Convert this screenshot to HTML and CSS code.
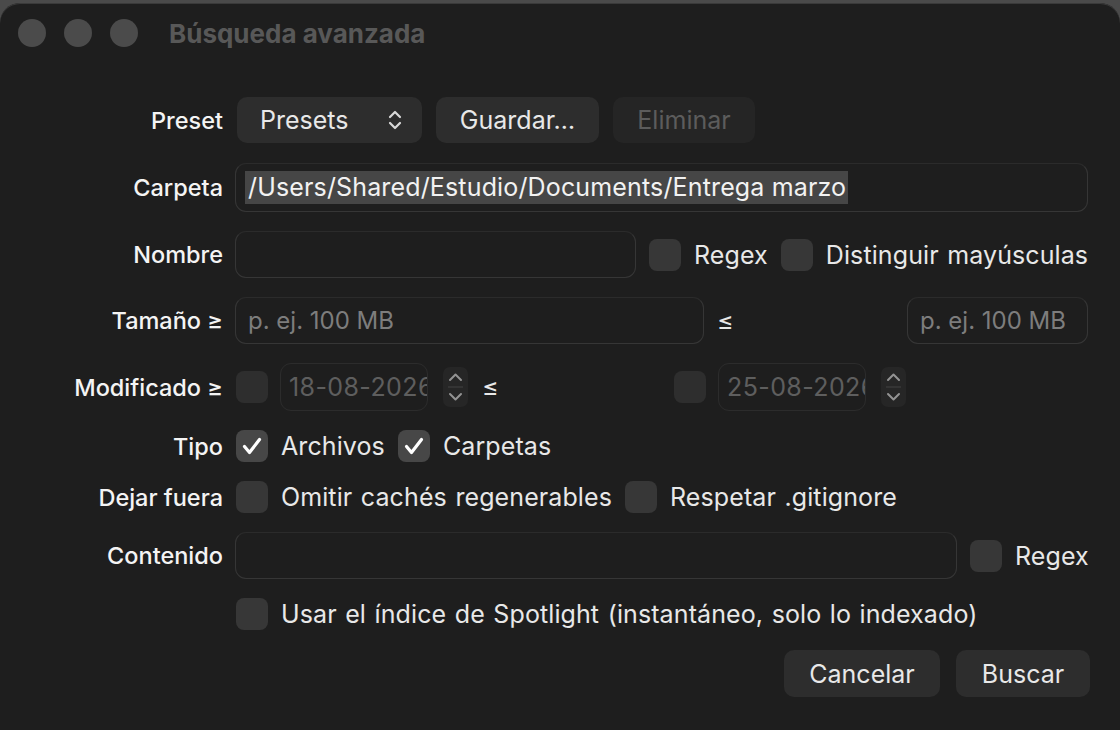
FILE: index.html
```html
<!DOCTYPE html>
<html lang="es">
<head>
<meta charset="utf-8">
<title>Búsqueda avanzada</title>
<link rel="stylesheet" href="styles.css">
</head>
<body>
<div class="window">
  <div class="titlebar">
    <div class="lights"><span class="light"></span><span class="light"></span><span class="light"></span></div>
    <div class="title">Búsqueda avanzada</div>
  </div>
  <div class="form">
    <div class="row r-preset">
      <div class="lbl">Preset</div>
      <div class="ctl">
        <div class="btn popup"><span>Presets</span>
          <svg class="updown" width="14" height="22" viewBox="0 0 14 22"><polyline points="2,8 7,3 12,8" /><polyline points="2,14 7,19 12,14" /></svg>
        </div>
        <div class="btn b-save">Guardar…</div>
        <div class="btn b-del disabled">Eliminar</div>
      </div>
    </div>
    <div class="row r-folder">
      <div class="lbl">Carpeta</div>
      <div class="ctl">
        <div class="field f-folder"><span class="sel">/Users/Shared/Estudio/Documents/Entrega marzo</span></div>
      </div>
    </div>
    <div class="row r-field">
      <div class="lbl">Nombre</div>
      <div class="ctl opts">
        <div class="field f-name"></div>
        <span class="cb"></span><span class="opt">Regex</span>
        <span class="cb"></span><span class="opt">Distinguir mayúsculas</span>
      </div>
    </div>
    <div class="row r-field">
      <div class="lbl">Tamaño ≥</div>
      <div class="ctl">
        <div class="field f-size1"><span class="ph">p. ej. 100 MB</span></div>
        <span class="le">≤</span>
        <div class="field f-size2"><span class="ph">p. ej. 100 MB</span></div>
      </div>
    </div>
    <div class="row r-date">
      <div class="lbl">Modificado ≥</div>
      <div class="ctl">
        <span class="cb dim first"></span>
        <div class="field date"><span>18-08-2026</span></div>
        <span class="stepper"><svg width="25" height="40" viewBox="0 0 25 40"><polyline points="7,13 12.5,7.5 18,13" /><line x1="5" y1="20" x2="20" y2="20" class="div" /><polyline points="7,27 12.5,32.5 18,27" /></svg></span>
        <span class="le2">≤</span>
        <span class="cb dim"></span>
        <div class="field date"><span>25-08-2026</span></div>
        <span class="stepper"><svg width="25" height="40" viewBox="0 0 25 40"><polyline points="7,13 12.5,7.5 18,13" /><line x1="5" y1="20" x2="20" y2="20" class="div" /><polyline points="7,27 12.5,32.5 18,27" /></svg></span>
      </div>
    </div>
    <div class="row r-check">
      <div class="lbl">Tipo</div>
      <div class="ctl opts">
        <span class="cb on first"><svg width="32" height="32" viewBox="0 0 32 32"><polyline points="8.5,16.5 13.5,22.5 23.5,9.5" /></svg></span><span class="opt">Archivos</span>
        <span class="cb on"><svg width="32" height="32" viewBox="0 0 32 32"><polyline points="8.5,16.5 13.5,22.5 23.5,9.5" /></svg></span><span class="opt">Carpetas</span>
      </div>
    </div>
    <div class="row r-check">
      <div class="lbl">Dejar fuera</div>
      <div class="ctl opts">
        <span class="cb first"></span><span class="opt">Omitir cachés regenerables</span>
        <span class="cb"></span><span class="opt">Respetar .gitignore</span>
      </div>
    </div>
    <div class="row r-field">
      <div class="lbl">Contenido</div>
      <div class="ctl opts">
        <div class="field f-content"></div>
        <span class="cb"></span><span class="opt">Regex</span>
      </div>
    </div>
    <div class="row r-check">
      <div class="lbl"></div>
      <div class="ctl opts">
        <span class="cb first"></span><span class="opt">Usar el índice de Spotlight (instantáneo, solo lo indexado)</span>
      </div>
    </div>
    <div class="actions">
      <div class="btn b-cancel">Cancelar</div>
      <div class="btn b-search">Buscar</div>
    </div>
  </div>
</div>
</body>
</html>
```

FILE: styles.css
```css
html, body {
  margin: 0;
  padding: 0;
}
body {
  background: #4a4a4a;
  font-family: "Inter", "Noto Sans", sans-serif;
  font-size: 25px;
  color: #e8e8e8;
  width: 1120px;
  height: 730px;
  overflow: hidden;
}
.window {
  margin-top: 3px;
  height: 727px;
  background: #1e1e1e;
  border-radius: 20px 20px 0 0;
  box-shadow: inset 0 1px 0 #3a3a3a;
}
.titlebar {
  height: 60px;
  display: flex;
  align-items: center;
}
.lights {
  display: flex;
  gap: 18px;
  margin-left: 18px;
}
.light {
  width: 28px;
  height: 28px;
  border-radius: 50%;
  background: #4b4b4b;
}
.title {
  margin-left: 31px;
  font-weight: 700;
  font-size: 26px;
  color: #585858;
  margin-top: 1px;
}
.form {
  padding: 34px 32px 0 8px;
  display: flex;
  flex-direction: column;
  gap: 19px;
}
.row {
  display: grid;
  grid-template-columns: 215px 1fr;
  column-gap: 12px;
  align-items: center;
}
.r-preset { height: 46px; margin-bottom: 1px; }
.r-folder { height: 49px; }
.r-field { height: 47px; }
.r-date { height: 48px; }
.r-check { height: 32px; }
.lbl {
  text-align: right;
  white-space: nowrap;
  font-size: 23.5px;
  font-weight: 500;
  color: #f4f4f4;
}
.ctl {
  display: flex;
  align-items: center;
  height: 100%;
}
.opts { gap: 13px; }
.opt {
  letter-spacing: 0.1px;
  word-spacing: 1.4px;
  white-space: nowrap;
}
.btn {
  height: 46px;
  border-radius: 10px;
  background: #2d2d2d;
  display: flex;
  align-items: center;
  justify-content: center;
  box-sizing: border-box;
  color: #e8e8e8;
}
.r-preset .ctl { gap: 14px; padding-left: 2px; }
.popup {
  width: 185px;
  justify-content: space-between;
  padding: 0 20px 0 23px;
}
.updown polyline {
  fill: none;
  stroke: #d8d8d8;
  stroke-width: 2.2;
  stroke-linecap: round;
  stroke-linejoin: round;
}
.b-save { width: 163px; }
.b-del { width: 142px; }
.disabled {
  background: #252525;
  color: #5c5c5c;
}
.field {
  height: 100%;
  box-sizing: border-box;
  border: 1px solid #363636;
  border-top-color: #2b2b2b;
  border-radius: 11px;
  display: flex;
  align-items: center;
  padding-left: 12px;
  overflow: hidden;
  white-space: nowrap;
}
.f-folder {
  width: 100%;
  padding-left: 9px;
}
.sel {
  background: #464646;
  color: #f2f2f2;
  line-height: 33px;
  padding: 0 2px 0 3px;
  letter-spacing: 0.15px;
}
.f-name { width: 401px; }
.f-size1 { width: 469px; }
.f-size2 { width: 181px; margin-left: auto; }
.f-content { width: 722px; }
.ph {
  color: #7d7d7d;
  font-size: 24px;
}
.le { margin-left: 13px; }
.cb {
  width: 32px;
  height: 32px;
  border-radius: 8px;
  background: #373737;
  flex: none;
  display: flex;
  align-items: center;
  justify-content: center;
}
.cb.first { margin-left: 1px; }
.cb.dim { background: #2e2e2e; }
.cb.on { background: #474747; }
.cb.on polyline {
  fill: none;
  stroke: #ffffff;
  stroke-width: 3.2;
  stroke-linecap: round;
  stroke-linejoin: round;
}
.date {
  width: 148px;
  margin-left: 12px;
  padding-left: 8px;
  color: #5e5e5e;
  border-color: #2c2c2c;
  letter-spacing: 0.4px;
}
.stepper {
  width: 25px;
  height: 40px;
  border-radius: 7px;
  background: #262626;
  margin-left: 15px;
  flex: none;
}
.stepper polyline {
  fill: none;
  stroke: #939393;
  stroke-width: 2;
  stroke-linecap: round;
  stroke-linejoin: round;
}
.stepper .div {
  stroke: #3a3a3a;
  stroke-width: 1.5;
}
.le2 {
  margin-left: 14px;
  width: 192px;
  flex: none;
}
.actions {
  display: flex;
  justify-content: flex-end;
  gap: 16px;
  margin-right: -2px;
  margin-top: 1px;
}
.actions .btn { height: 47px; }
.b-cancel { width: 156px; }
.b-search { width: 134px; }
```
